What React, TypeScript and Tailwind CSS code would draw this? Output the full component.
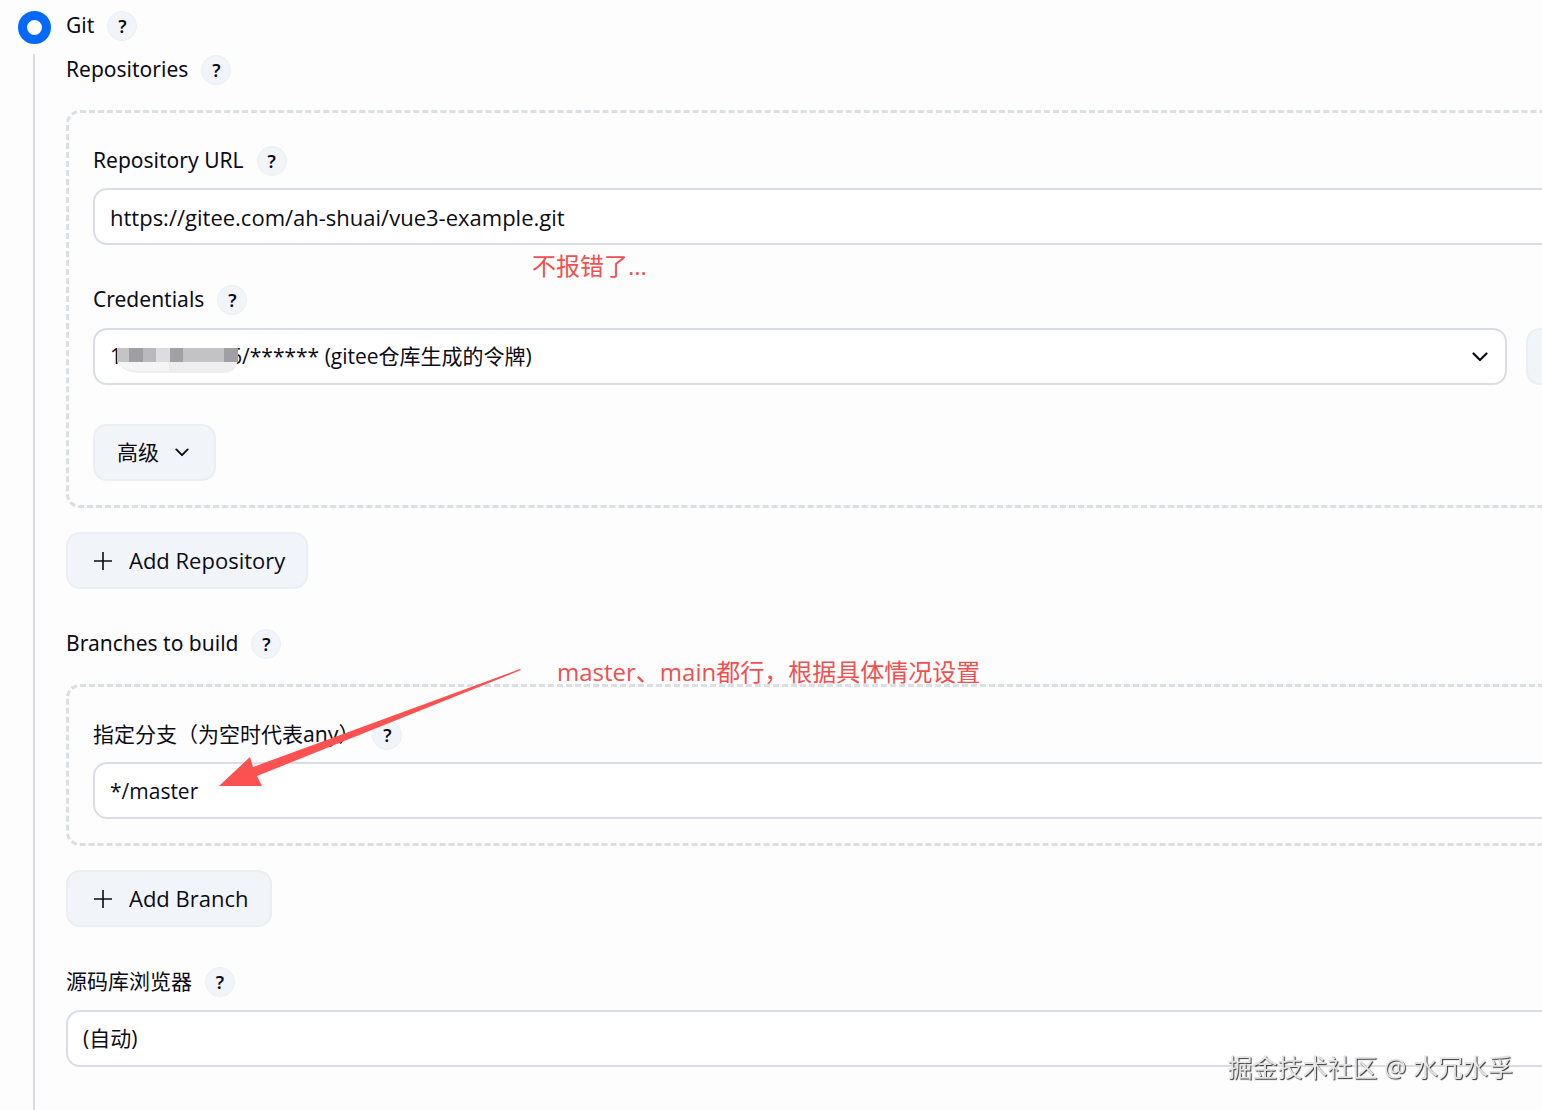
import type { ReactNode } from "react";
import { useState } from "react";

const buttonClass =
  "flex h-[57px] items-center rounded-[14px] border-2 border-[#ebeff3] bg-[#f1f5f9]";

const fieldClass =
  "block h-[57px] w-full appearance-none rounded-[14px] border-2 border-[#dadde5] bg-white px-[15px] font-['Open_Sans','Noto_Sans_CJK_SC',sans-serif] outline-none";

const noteClass =
  "absolute font-['Open_Sans','Noto_Sans_CJK_SC',sans-serif] text-[24px] text-[#f0504f]";

// one fill per mosaic tile, left to right
const mosaicTiles = [
  { x: 0, w: 12, fill: "#c4c3c5" },
  { x: 12, w: 14, fill: "#9f9ea3" },
  { x: 26, w: 13, fill: "#bab9bd" },
  { x: 39, w: 14, fill: "#dddcde" },
  { x: 53, w: 13, fill: "#a2a1a6" },
  { x: 66, w: 41, fill: "#c3c2c5" },
  { x: 107, w: 14, fill: "#a09fa4" },
];

function HelpButton({ topic }: { topic: string }) {
  return (
    <button
      type="button"
      aria-label={`Help for ${topic}`}
      className="flex size-[30px] items-center justify-center rounded-full border border-[#ebeff3] bg-[#f1f5f9] pb-px text-[18px] font-semibold"
    >
      ?
    </button>
  );
}

function FieldLabel({ htmlFor, children }: { htmlFor?: string; children: string }) {
  return (
    <div className="flex h-[30px] items-center gap-[13px]">
      {htmlFor ? (
        <label htmlFor={htmlFor} className="pb-[2px]">
          {children}
        </label>
      ) : (
        <h2 className="pb-[2px]">{children}</h2>
      )}
      <HelpButton topic={children} />
    </div>
  );
}

function Panel({ children }: { children: ReactNode }) {
  return (
    <div className="relative mt-[25px] rounded-[14px] border-3 border-dashed border-[#dcdfe1] px-6 pt-[33px] pb-6">
      {children}
    </div>
  );
}

function Chevron({ className }: { className: string }) {
  return (
    <svg viewBox="0 0 16 10" fill="none" stroke="currentColor" className={className}>
      <path d="M1.5 1.5 8 8l6.5-6.5" strokeWidth="2.2" strokeLinecap="round" strokeLinejoin="round" />
    </svg>
  );
}

function AddButton({ children }: { children: string }) {
  return (
    <button
      type="button"
      className={`${buttonClass} mt-6 gap-[17px] pr-[21px] pl-[26px] font-['Open_Sans',sans-serif] text-[22px]`}
    >
      <svg viewBox="0 0 18 18" stroke="currentColor" className="size-[18px]">
        <path d="M9 0v18M0 9h18" strokeWidth="1.6" />
      </svg>
      <span className="pb-[2px]">{children}</span>
    </button>
  );
}

function Mosaic() {
  return (
    <svg viewBox="0 0 121 28" className="pointer-events-none absolute top-[19px] left-6 h-7 w-[121px]">
      <path d="M0 12h121q-2 14-14 14H24Q4 26 0 12Z" fill="#efeeef" />
      <path d="M0 12h52v12H22Q4 24 0 12Z" fill="#f6f5f6" />
      {mosaicTiles.map((tile) => (
        <rect key={tile.x} x={tile.x} y="1" width={tile.w} height="14" fill={tile.fill} />
      ))}
    </svg>
  );
}

export default function App() {
  const [url, setUrl] = useState("https://gitee.com/ah-shuai/vue3-example.git");
  const [branch, setBranch] = useState("*/master");

  return (
    <main className="flex min-h-screen overflow-hidden bg-[#fdfdfe] pt-[11px] pl-[18px] font-['Noto_Sans','Noto_Sans_CJK_SC',sans-serif] text-[21px] leading-[30px] text-[#0c0c16]">
      <div className="flex w-12 shrink-0 flex-col">
        <input
          id="scm-git"
          type="radio"
          name="scm"
          defaultChecked
          className="size-[33px] appearance-none rounded-full border-[9px] border-[#0468fa] bg-white"
        />
        <div className="mt-[10px] ml-[15px] w-[2px] flex-1 bg-[#dadde2]" />
      </div>

      <div className="-mr-32 min-w-0 flex-1">
        <FieldLabel htmlFor="scm-git">Git</FieldLabel>

        <section className="mt-[14px]">
          <FieldLabel>Repositories</FieldLabel>
          <Panel>
            <FieldLabel htmlFor="repo-url">Repository URL</FieldLabel>
            <input
              id="repo-url"
              value={url}
              onChange={(event) => setUrl(event.target.value)}
              className={`${fieldClass} mt-3 text-[22px]`}
            />
            <p className={`${noteClass} top-[138px] left-[463px]`}>不报错了...</p>

            <div className="mt-10">
              <FieldLabel htmlFor="credentials">Credentials</FieldLabel>
            </div>
            <div className="mt-[13px] flex gap-[19px]">
              <div className="relative flex-1">
                <select id="credentials" className={`${fieldClass} pb-[2px]`}>
                  <option>{"1\u2007\u2007\u2007\u2007\u2007\u2007\u2007\u2007\u20076/****** (gitee仓库生成的令牌)"}</option>
                </select>
                <Mosaic />
                <Chevron className="pointer-events-none absolute top-[24px] right-[19px] h-[10px] w-4" />
              </div>
              <button type="button" aria-label="添加" className={`${buttonClass} w-[117px]`} />
            </div>

            <button type="button" className={`${buttonClass} mt-[39px] gap-4 pr-[25px] pl-[22px]`}>
              <span className="pb-[2px]">高级</span>
              <Chevron className="h-[9px] w-[14px]" />
            </button>
          </Panel>
          <AddButton>Add Repository</AddButton>
        </section>

        <section className="mt-10">
          <FieldLabel>Branches to build</FieldLabel>
          <Panel>
            <FieldLabel htmlFor="branch">指定分支（为空时代表any）</FieldLabel>
            <input
              id="branch"
              value={branch}
              onChange={(event) => setBranch(event.target.value)}
              className={`${fieldClass} mt-3`}
            />
            <p className={`${noteClass} -top-[30px] left-[488px]`}>
              master、main都行，根据具体情况设置
            </p>
            <svg
              viewBox="0 0 302 118"
              className="pointer-events-none absolute -top-[18px] left-[150px] h-[118px] w-[302px]"
            >
              <path d="M0 117 31 88l3 10L301 0l1 1L38 107l5 10Z" fill="#fc5151" />
            </svg>
          </Panel>
          <AddButton>Add Branch</AddButton>
        </section>

        <section className="mt-10">
          <FieldLabel htmlFor="browser">源码库浏览器</FieldLabel>
          <select id="browser" className={`${fieldClass} mt-[13px] pb-[2px]`}>
            <option>(自动)</option>
          </select>
        </section>
      </div>

      <p className="fixed right-[29px] bottom-7 font-['Open_Sans','Noto_Sans_CJK_SC',sans-serif] text-[25px] text-[#e4e4e4] [text-shadow:1px_1px_1px_#333]">
        掘金技术社区 @ 水冗水孚
      </p>
    </main>
  );
}
